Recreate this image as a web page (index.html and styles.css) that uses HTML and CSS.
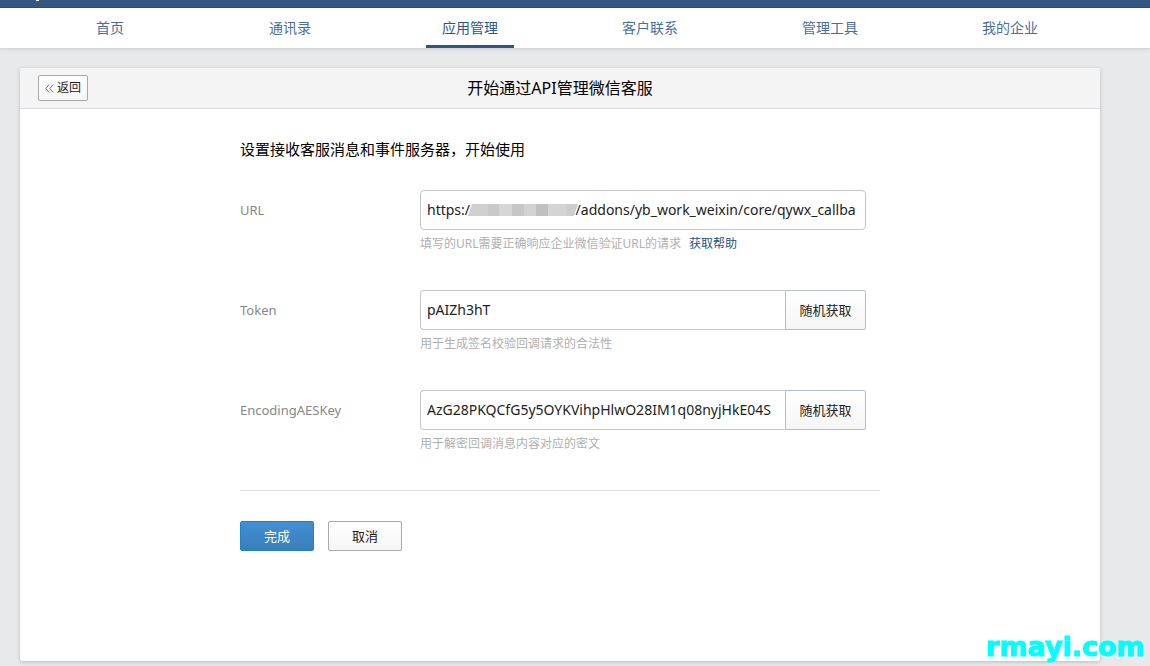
FILE: index.html
```html
<!DOCTYPE html>
<html lang="zh-CN">
<head>
<meta charset="utf-8">
<title>开始通过API管理微信客服</title>
<link rel="stylesheet" href="styles.css">
</head>
<body>
<header class="header">
  <div class="topbar"><span class="topbar-mark"></span></div>
  <nav class="nav">
    <a class="nav-item" href="#">首页</a>
    <a class="nav-item" href="#">通讯录</a>
    <a class="nav-item nav-item-active" href="#">应用管理</a>
    <a class="nav-item" href="#">客户联系</a>
    <a class="nav-item" href="#">管理工具</a>
    <a class="nav-item" href="#">我的企业</a>
  </nav>
</header>
<main class="page">
  <section class="card">
    <div class="card-head">
      <button class="btn btn-back" type="button">
        <svg class="back-icon" viewBox="0 0 9 9" width="9" height="9" aria-hidden="true"><path d="M4.2.5.8 4.5l3.4 4M8.2.5 4.8 4.5l3.4 4"/></svg>返回
      </button>
      <h1 class="card-title">开始通过API管理微信客服</h1>
    </div>
    <form class="form">
      <h2 class="form-title">设置接收客服消息和事件服务器，开始使用</h2>
      <div class="row">
        <label class="label" for="url">URL</label>
        <div class="field">
          <div class="control">
            <input class="input" id="url" type="text" value="https:/&nbsp;&nbsp;&nbsp;&nbsp;&nbsp;&nbsp;&nbsp;&nbsp;&nbsp;&nbsp;&nbsp;&nbsp;&nbsp;&nbsp;&nbsp;&nbsp;&nbsp;&nbsp;&nbsp;&nbsp;&nbsp;&nbsp;&nbsp;&nbsp;&nbsp;&nbsp;&nbsp;&nbsp;&nbsp;/addons/yb_work_weixin/core/qywx_callba">
            <span class="mask"></span>
          </div>
          <p class="hint">填写的URL需要正确响应企业微信验证URL的请求<a class="help" href="#">获取帮助</a></p>
        </div>
      </div>
      <div class="row">
        <label class="label" for="token">Token</label>
        <div class="field">
          <div class="control">
            <input class="input input-joined" id="token" type="text" value="pAIZh3hT">
            <button class="btn btn-random" type="button">随机获取</button>
          </div>
          <p class="hint">用于生成签名校验回调请求的合法性</p>
        </div>
      </div>
      <div class="row">
        <label class="label" for="aeskey">EncodingAESKey</label>
        <div class="field">
          <div class="control">
            <input class="input input-joined" id="aeskey" type="text" value="AzG28PKQCfG5y5OYKVihpHlwO28IM1q08nyjHkE04S">
            <button class="btn btn-random" type="button">随机获取</button>
          </div>
          <p class="hint">用于解密回调消息内容对应的密文</p>
        </div>
      </div>
      <div class="actions">
        <button class="btn btn-primary" type="button">完成</button>
        <button class="btn btn-cancel" type="button">取消</button>
      </div>
    </form>
  </section>
</main>
<div class="watermark">rmayi.com</div>
</body>
</html>
```
FILE: styles.css
```css
* { box-sizing: border-box; }

body {
  margin: 0;
  background: #e7e9eb;
  color: #000;
  font: 14px/20px "Noto Sans", "Noto Sans CJK SC", sans-serif;
}

h1, h2, p { margin: 0; font-weight: 400; }
a { text-decoration: none; }
button, input { font: inherit; color: inherit; }

.header {
  background: #fff;
  border-bottom: 1px solid #d6d9dc;
  box-shadow: 0 1px 3px rgba(0, 0, 0, .08);
}

.topbar {
  height: 8px;
  padding-left: 36px;
  background: #335883;
  border-bottom: 1px solid #2c4f79;
}

.topbar-mark {
  display: block;
  width: 3px;
  height: 1px;
  background: #fff;
}

.nav {
  display: flex;
  padding: 0 50px 0 20px;
}

.nav-item {
  flex: 1;
  display: flex;
  flex-direction: column;
  align-items: center;
  height: 40px;
  padding-top: 10px;
  color: #4a6e9c;
}

.nav-item-active { color: #2d5688; }

.nav-item-active::after {
  content: "";
  width: 88px;
  height: 3px;
  margin-top: auto;
  background: #2d5688;
}

.page { padding: 19px 50px 5px 20px; }

.card {
  background: #fff;
  border-radius: 3px;
  box-shadow: 0 1px 4px rgba(0, 0, 0, .2);
}

.card-head {
  display: grid;
  grid-template-columns: 1fr auto 1fr;
  align-items: center;
  height: 41px;
  padding: 0 18px;
  background: #f4f4f4;
  border-bottom: 1px solid #d9dbde;
  border-radius: 3px 3px 0 0;
}

.card-title { font-size: 16px; }

.btn {
  border: 1px solid #a9a9a9;
  border-radius: 2px;
  background: linear-gradient(#fff, #f6f6f6);
  color: #222;
  font-size: 13px;
  cursor: pointer;
}

.btn-back {
  justify-self: start;
  display: flex;
  align-items: center;
  gap: 3px;
  height: 26px;
  padding: 0 6px;
  font-size: 12px;
}

.back-icon { fill: none; stroke: #777; stroke-width: 1; }

.form {
  max-width: 640px;
  margin: 0 auto;
  padding: 30px 0 110px;
}

.form-title {
  margin-bottom: 31px;
  font-size: 15px;
  line-height: 20px;
}

.row {
  display: flex;
  height: 100px;
}

.label {
  width: 180px;
  color: #878787;
  font-size: 13px;
  line-height: 40px;
}

.field { width: 446px; }

.control {
  position: relative;
  display: flex;
  height: 40px;
}

.input {
  flex: 1;
  min-width: 0;
  padding: 0 6px;
  border: 1px solid #c4c6c9;
  border-radius: 4px;
  background: #fff;
  color: #222;
  outline: 0;
}

.input-joined {
  border-right: 0;
  border-radius: 4px 0 0 4px;
}

.btn-random {
  width: 81px;
  padding: 0;
  border-color: #b4bdc7;
  border-radius: 0 2px 2px 0;
}

/* Mosaic that hides the host name inside the URL field */
.mask {
  position: absolute;
  left: 48px;
  top: 14px;
  width: 110px;
  height: 12px;
  background: linear-gradient(90deg, #d0d0d0 0 20px, #c9c9c9 20px 31px, #d6d6d6 31px 44px, #c6c6c6 44px 56px, #d2d2d2 56px 68px, #c0c0c0 68px 80px, #d4d4d4 80px 98px, #cecece 98px);
  clip-path: polygon(4px 0, 100% 0, 106px 100%, 0 100%);
}

.hint {
  padding-top: 5px;
  color: #afafaf;
  font-size: 12px;
  line-height: 18px;
}

.help { margin-left: 8px; color: #1c5384; }

.actions {
  display: flex;
  gap: 14px;
  padding-top: 30px;
  border-top: 1px solid #e2e2e2;
}

.btn-primary,
.btn-cancel {
  width: 74px;
  height: 30px;
  padding: 0;
}

.btn-primary {
  border-color: #2080c8;
  background: linear-gradient(#438fd3, #377fb9);
  color: #fff;
}

.watermark {
  position: fixed;
  right: 5px;
  bottom: 4px;
  color: #0ff;
  font: 700 27px/30px "DejaVu Sans", sans-serif;
  -webkit-text-stroke: 1px #0ff;
}
```
